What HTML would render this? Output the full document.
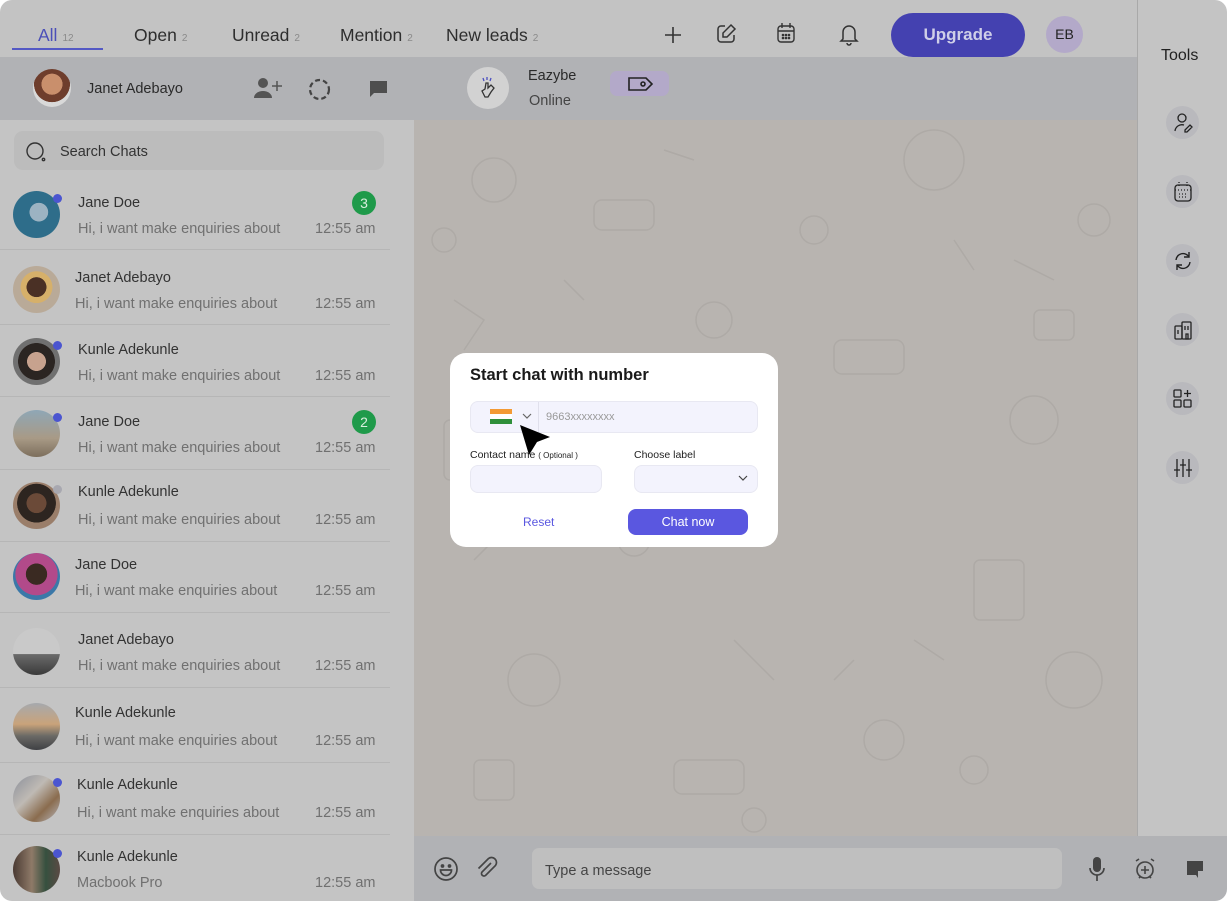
<!DOCTYPE html>
<html><head><meta charset="utf-8"><style>
*{margin:0;padding:0;box-sizing:border-box}
body{width:1227px;height:901px;overflow:hidden;background:#fff;font-family:"Liberation Sans",sans-serif;position:relative}
.a{position:absolute}
.t{position:absolute;white-space:nowrap;line-height:18px}
.name{font-size:14.5px;color:#333}
.msg{font-size:14.5px;color:#707070}
.time{font-size:14.5px;color:#707070;left:315px}
.av{position:absolute;left:13px;width:47px;height:47px;border-radius:50%}
.dot{position:absolute;left:53px;width:9px;height:9px;border-radius:50%;background:#4b55d0}
.sep{position:absolute;left:0;width:390px;height:1px;background:#b6b6b6}
.badge{position:absolute;left:352px;width:24px;height:24px;border-radius:50%;background:#1f9a4a;color:#d8eedd;font-size:14px;text-align:center;line-height:24px}
.ti{position:absolute;left:1166px;width:33px;height:33px;border-radius:50%;background:#b9b9bd}
.tab{position:absolute;top:25px;font-size:17.5px;color:#2e2e2e;line-height:20px}
.tab small{font-size:10px;color:#8a8a8a;margin-left:5px}
</style></head><body>
<div class="a" style="left:0;top:0;width:1137px;height:57px;background:#c3c3c3;border-top-left-radius:12px"></div>
<div class="tab" style="left:38px;color:#4b4fb8">All<small>12</small></div>
<div class="a" style="left:12px;top:48px;width:91px;height:2px;background:#5459c4"></div>
<div class="tab" style="left:134px">Open<small>2</small></div>
<div class="tab" style="left:232px">Unread<small>2</small></div>
<div class="tab" style="left:340px">Mention<small>2</small></div>
<div class="tab" style="left:446px">New leads<small>2</small></div>
<svg class="a" style="left:663px;top:25px" width="20" height="20" viewBox="0 0 20 20"><path d="M10 2v16M2 10h16" stroke="#333" stroke-width="1.6"/></svg>
<svg class="a" style="left:714px;top:22px" width="24" height="24" viewBox="0 0 24 24" fill="none" stroke="#333" stroke-width="1.5"><path d="M11 4H7a3 3 0 0 0-3 3v10a3 3 0 0 0 3 3h10a3 3 0 0 0 3-3v-4"/><path d="M17 3l4 4-8 8H9v-4z"/></svg>
<svg class="a" style="left:776px;top:22px" width="20" height="22" viewBox="0 0 20 22" fill="none" stroke="#333" stroke-width="1.4"><rect x="2" y="4" width="16" height="16" rx="3"/><path d="M2 9h16M6 1v5M14 1v5"/><circle cx="7" cy="13" r=".6" fill="#333"/><circle cx="10" cy="13" r=".6" fill="#333"/><circle cx="13" cy="13" r=".6" fill="#333"/><circle cx="7" cy="16" r=".6" fill="#333"/><circle cx="10" cy="16" r=".6" fill="#333"/><circle cx="13" cy="16" r=".6" fill="#333"/></svg>
<svg class="a" style="left:838px;top:22px" width="22" height="24" viewBox="0 0 22 24" fill="none" stroke="#333" stroke-width="1.5"><path d="M5 17V10a6 6 0 0 1 12 0v7l2 2H3z"/><path d="M9 21a2 2 0 0 0 4 0"/></svg>
<div class="a" style="left:891px;top:13px;width:134px;height:44px;border-radius:22px;background:#4441b0;color:#cfcfe8;font-size:17px;font-weight:bold;text-align:center;line-height:44px">Upgrade</div>
<div class="a" style="left:1046px;top:16px;width:37px;height:37px;border-radius:50%;background:#b3a9c9;color:#222;font-size:14px;text-align:center;line-height:37px">EB</div>
<div class="a" style="left:1137px;top:0;width:90px;height:836px;background:#c4c4c4;border-left:1px solid #a9a9a9;border-top-right-radius:12px"></div>
<div class="t" style="left:1161px;top:47px;font-size:16px;color:#222">Tools</div>
<div class="ti" style="top:106px"></div><div class="ti" style="top:175px"></div><div class="ti" style="top:244px"></div><div class="ti" style="top:313px"></div><div class="ti" style="top:382px"></div><div class="ti" style="top:451px"></div>
<svg class="a" style="left:1172px;top:112px" width="22" height="22" viewBox="0 0 22 22" fill="none" stroke="#222" stroke-width="1.3"><circle cx="10" cy="6" r="4"/><path d="M3 19a7 7 0 0 1 9-6"/><path d="M13 18l5-5 2 2-5 5h-2z"/></svg>
<svg class="a" style="left:1173px;top:181px" width="20" height="22" viewBox="0 0 20 22" fill="none" stroke="#222" stroke-width="1.3"><rect x="2" y="4" width="16" height="16" rx="3"/><path d="M2 9h16M6 1v5M14 1v5M6 13h8M6 16h8" stroke-dasharray="1 2"/></svg>
<svg class="a" style="left:1172px;top:250px" width="22" height="22" viewBox="0 0 22 22" fill="none" stroke="#222" stroke-width="1.4"><path d="M4 10a7 7 0 0 1 13-3M18 12a7 7 0 0 1-13 3"/><path d="M17 2v5h-5M5 20v-5h5"/></svg>
<svg class="a" style="left:1172px;top:319px" width="22" height="22" viewBox="0 0 22 22" fill="none" stroke="#222" stroke-width="1.3"><rect x="3" y="7" width="7" height="13" rx="1"/><rect x="10" y="3" width="9" height="17" rx="1"/><path d="M6 11v4M13 7v4M16 7v4M14 15h2v5h-2z"/></svg>
<svg class="a" style="left:1172px;top:388px" width="22" height="22" viewBox="0 0 22 22" fill="none" stroke="#222" stroke-width="1.3"><rect x="2" y="2" width="7" height="7" rx="1"/><rect x="2" y="12" width="7" height="7" rx="1"/><rect x="12" y="12" width="7" height="7" rx="1"/><path d="M15.5 2v7M12 5.5h7"/></svg>
<svg class="a" style="left:1172px;top:457px" width="22" height="22" viewBox="0 0 22 22" fill="none" stroke="#222" stroke-width="1.3"><path d="M5 2v18M11 2v18M17 2v18M2 13h6M8 8h6M14 13h6"/></svg>
<div class="a" style="left:0;top:57px;width:1137px;height:63px;background:#b1b2b5"></div>
<div class="a" style="left:33px;top:69px;width:38px;height:38px;border-radius:50%;background:radial-gradient(circle at 50% 40%,#c98f6c 0 35%,#6e3d2c 36% 60%,#d9d9d9 61%)"></div>
<div class="t" style="left:87px;top:80px;font-size:14.5px;color:#2a2a2a">Janet Adebayo</div>
<svg class="a" style="left:254px;top:76px" width="30" height="24" viewBox="0 0 30 24" fill="#545454"><circle cx="9" cy="7" r="5"/><path d="M0 22a9 7 0 0 1 18 0z"/><path d="M23 5v10M18 10h10" stroke="#545454" stroke-width="1.5"/></svg>
<svg class="a" style="left:307px;top:77px" width="25" height="25" viewBox="0 0 25 25" fill="none" stroke="#444" stroke-width="2.2"><circle cx="12.5" cy="12.5" r="9.5" stroke-dasharray="5 3"/></svg>
<svg class="a" style="left:369px;top:80px" width="19" height="18" viewBox="0 0 19 18" fill="#4e4e4e"><path d="M1 1h17v12H5l-4 4z"/></svg>
<div class="a" style="left:467px;top:67px;width:42px;height:42px;border-radius:50%;background:#d2d2d2"></div>
<svg class="a" style="left:477px;top:76px" width="22" height="24" viewBox="0 0 22 24" fill="none" stroke="#333" stroke-width="1.3"><path d="M8 21l-3-6 3-2 1-6 2 0 0 5 3-3 3 3-3 4-3 5z"/><path d="M6 2l1 3M10 1v3M14 2l-1 3" stroke="#4b4fc0"/></svg>
<div class="t" style="left:528px;top:67px;font-size:14.5px;color:#2a2a2a">Eazybe</div>
<div class="t" style="left:529px;top:92px;font-size:14.5px;color:#444">Online</div>
<div class="a" style="left:610px;top:71px;width:59px;height:25px;border-radius:7px;background:#b3a9c9"></div>
<svg class="a" style="left:627px;top:75px" width="28" height="18" viewBox="0 0 28 18" fill="none" stroke="#222" stroke-width="1.6"><path d="M2 3h17l6 6-6 6H2z"/><circle cx="16" cy="9" r="2"/></svg>
<div class="a" style="left:0;top:120px;width:414px;height:781px;background:#c4c4c4;border-bottom-left-radius:12px"></div>
<div class="a" style="left:14px;top:131px;width:370px;height:39px;border-radius:9px;background:#bcbcbc"></div>
<svg class="a" style="left:25px;top:141px" width="22" height="22" viewBox="0 0 22 22" fill="none" stroke="#333" stroke-width="1.4"><circle cx="10" cy="10" r="8"/><circle cx="18.5" cy="18.5" r="1.2"/></svg>
<div class="t" style="left:60px;top:143px;font-size:14.5px;color:#333">Search Chats</div>

<div class="sep" style="top:249px"></div><div class="sep" style="top:324px"></div><div class="sep" style="top:396px"></div><div class="sep" style="top:469px"></div><div class="sep" style="top:541px"></div><div class="sep" style="top:612px"></div><div class="sep" style="top:687px"></div><div class="sep" style="top:762px"></div><div class="sep" style="top:834px"></div>

<div class="av" style="top:191px;background:radial-gradient(circle at 55% 45%,#9cb3c2 0 25%,#2e6d8a 26%)"></div><div class="dot" style="top:194px"></div>
<div class="t name" style="left:78px;top:194px">Jane Doe</div><div class="t msg" style="left:78px;top:220px">Hi, i want make enquiries about</div><div class="t time" style="top:220px">12:55 am</div><div class="badge" style="top:191px">3</div>

<div class="av" style="top:266px;background:radial-gradient(circle at 50% 45%,#4a3025 0 28%,#d6b06a 29% 45%,#b9aa98 46%)"></div>
<div class="t name" style="left:75px;top:269px">Janet Adebayo</div><div class="t msg" style="left:75px;top:295px">Hi, i want make enquiries about</div><div class="t time" style="top:295px">12:55 am</div>

<div class="av" style="top:338px;background:radial-gradient(circle at 50% 50%,#c7a28e 0 28%,#2b2522 29% 55%,#707070 56%)"></div><div class="dot" style="top:341px"></div>
<div class="t name" style="left:78px;top:341px">Kunle Adekunle</div><div class="t msg" style="left:78px;top:367px">Hi, i want make enquiries about</div><div class="t time" style="top:367px">12:55 am</div>

<div class="av" style="top:410px;background:linear-gradient(#8fa7b6,#a89a86 60%,#7c6e5c)"></div><div class="dot" style="top:413px"></div>
<div class="t name" style="left:78px;top:413px">Jane Doe</div><div class="t msg" style="left:78px;top:439px">Hi, i want make enquiries about</div><div class="t time" style="top:439px">12:55 am</div><div class="badge" style="top:410px">2</div>

<div class="av" style="top:482px;background:radial-gradient(circle at 50% 45%,#6b4a38 0 28%,#2d2520 29% 55%,#9a7e6a 56%)"></div><div class="dot" style="top:485px;background:#a8a8b0"></div>
<div class="t name" style="left:78px;top:483px">Kunle Adekunle</div><div class="t msg" style="left:78px;top:511px">Hi, i want make enquiries about</div><div class="t time" style="top:511px">12:55 am</div>

<div class="av" style="top:553px;background:radial-gradient(circle at 50% 45%,#3a2a22 0 30%,#b24a8a 31% 60%,#3b78a8 61%)"></div>
<div class="t name" style="left:75px;top:556px">Jane Doe</div><div class="t msg" style="left:75px;top:582px">Hi, i want make enquiries about</div><div class="t time" style="top:582px">12:55 am</div>

<div class="av" style="top:628px;background:linear-gradient(#c9c9c9 55%,#6b6b6b 56%,#3a3a3a)"></div>
<div class="t name" style="left:78px;top:631px">Janet Adebayo</div><div class="t msg" style="left:78px;top:657px">Hi, i want make enquiries about</div><div class="t time" style="top:657px">12:55 am</div>

<div class="av" style="top:703px;background:linear-gradient(#a6a9ad,#c9a37a 45%,#6b6a66 70%,#3f4044)"></div>
<div class="t name" style="left:75px;top:704px">Kunle Adekunle</div><div class="t msg" style="left:75px;top:732px">Hi, i want make enquiries about</div><div class="t time" style="top:732px">12:55 am</div>

<div class="av" style="top:775px;background:linear-gradient(135deg,#8a8f9a,#bfbab4 40%,#8a6c4e 70%,#b8b8bf)"></div><div class="dot" style="top:778px"></div>
<div class="t name" style="left:77px;top:776px">Kunle Adekunle</div><div class="t msg" style="left:77px;top:804px">Hi, i want make enquiries about</div><div class="t time" style="top:804px">12:55 am</div>

<div class="av" style="top:846px;background:linear-gradient(90deg,#4a3a33,#8e7a68 40%,#36503f 70%,#5a4a44)"></div><div class="dot" style="top:849px"></div>
<div class="t name" style="left:77px;top:848px">Kunle Adekunle</div><div class="t msg" style="left:77px;top:874px">Macbook Pro</div><div class="t time" style="top:874px">12:55 am</div>

<div class="a" style="left:414px;top:120px;width:723px;height:716px;background:#b8b4b0"></div>
<svg class="a" style="left:414px;top:120px" width="723" height="716" fill="none" stroke="#aeaaa6" stroke-width="1.5">
<circle cx="80" cy="60" r="22"/><circle cx="520" cy="40" r="30"/><circle cx="300" cy="200" r="18"/><circle cx="620" cy="300" r="24"/><circle cx="120" cy="560" r="26"/><circle cx="470" cy="620" r="20"/><circle cx="660" cy="560" r="28"/><circle cx="220" cy="420" r="16"/><circle cx="400" cy="110" r="14"/><circle cx="30" cy="120" r="12"/><circle cx="680" cy="100" r="16"/><circle cx="260" cy="300" r="10"/><circle cx="560" cy="650" r="14"/><circle cx="340" cy="700" r="12"/>
<rect x="180" y="80" width="60" height="30" rx="8"/><rect x="420" y="220" width="70" height="34" rx="8"/><rect x="260" y="640" width="70" height="34" rx="8"/><rect x="30" y="300" width="50" height="60" rx="6"/><rect x="560" y="440" width="50" height="60" rx="6"/><rect x="620" y="190" width="40" height="30" rx="6"/><rect x="60" y="640" width="40" height="40" rx="6"/>
<path d="M40 180l30 20-20 30M600 140l40 20M320 520l40 40M60 440l30-30M500 520l30 20M200 300l30-20M150 160l20 20M420 560l20-20M540 120l20 30M250 30l30 10"/>
</svg>
<div class="a" style="left:414px;top:836px;width:813px;height:65px;background:#b1b2b5;border-bottom-right-radius:12px"></div>
<svg class="a" style="left:433px;top:856px" width="26" height="26" viewBox="0 0 26 26" fill="none" stroke="#444" stroke-width="1.7"><circle cx="13" cy="13" r="11"/><circle cx="9.5" cy="10" r="1" fill="#444"/><circle cx="16.5" cy="10" r="1" fill="#444"/><path d="M7.5 14h11a5.5 5.5 0 0 1-11 0z"/></svg>
<svg class="a" style="left:475px;top:856px" width="24" height="26" viewBox="0 0 24 26" fill="none" stroke="#444" stroke-width="1.7"><path d="M16 7l-9 9a2.5 2.5 0 0 0 3.5 3.5l10-10a5 5 0 0 0-7-7l-10 10"/></svg>
<div class="a" style="left:532px;top:848px;width:530px;height:41px;border-radius:7px;background:#bfbfbf"></div>
<div class="t" style="left:545px;top:862px;font-size:14.5px;color:#444">Type a message</div>
<svg class="a" style="left:1087px;top:856px" width="20" height="26" viewBox="0 0 20 26" fill="#444"><rect x="6" y="1" width="8" height="15" rx="4"/><path d="M3 12a7 7 0 0 0 14 0M10 19v6" stroke="#444" stroke-width="1.7" fill="none"/></svg>
<svg class="a" style="left:1133px;top:857px" width="24" height="24" viewBox="0 0 24 24" fill="none" stroke="#444" stroke-width="1.6"><circle cx="12" cy="13" r="8"/><path d="M12 9v8M8 13h8M3 4l3-2M21 4l-3-2M6 21l2-2M18 21l-2-2"/></svg>
<svg class="a" style="left:1186px;top:860px" width="19" height="19" viewBox="0 0 19 19" fill="#444"><path d="M1 1h16v10h-5v7l-2-3H1z"/></svg>
<div class="a" style="left:450px;top:353px;width:328px;height:194px;border-radius:16px;background:#fff"></div>
<div class="t" style="left:470px;top:366px;font-size:16.5px;font-weight:bold;color:#1a1a1a">Start chat with number</div>
<div class="a" style="left:470px;top:401px;width:288px;height:32px;border-radius:8px;background:#f3f3fd;border:1px solid #e8e8f2"></div>
<div class="a" style="left:538px;top:402px;width:1px;height:30px;background:#e0e0ec"></div>
<div class="a" style="left:490px;top:409px;width:22px;height:15px;background:linear-gradient(#f39a34 33%,#fff 33% 66%,#2f8f3a 66%)"></div>
<svg class="a" style="left:521px;top:412px" width="12" height="8" viewBox="0 0 12 8" fill="none" stroke="#666" stroke-width="1.2"><path d="M2 2l4 4 4-4"/></svg>
<div class="t" style="left:546px;top:408px;font-size:11px;color:#999">9663xxxxxxxx</div>
<div class="t" style="left:470px;top:446px;font-size:10.5px;color:#222">Contact name <span style="font-size:8px">( Optional )</span></div>
<div class="t" style="left:634px;top:446px;font-size:10.5px;color:#222">Choose label</div>
<div class="a" style="left:470px;top:465px;width:132px;height:28px;border-radius:8px;background:#f3f3fd;border:1px solid #e8e8f2"></div>
<div class="a" style="left:634px;top:465px;width:124px;height:28px;border-radius:8px;background:#f3f3fd;border:1px solid #e8e8f2"></div>
<svg class="a" style="left:737px;top:474px" width="12" height="8" viewBox="0 0 12 8" fill="none" stroke="#444" stroke-width="1.2"><path d="M2 2l4 4 4-4"/></svg>
<div class="t" style="left:523px;top:513px;font-size:12px;color:#5a57e0">Reset</div>
<div class="a" style="left:628px;top:509px;width:120px;height:26px;border-radius:8px;background:#5a57e0;color:#fff;font-size:12.5px;text-align:center;line-height:26px">Chat now</div>
<svg class="a" style="left:517px;top:423px" width="34" height="34" viewBox="0 0 34 34"><path d="M3 2l30 12-13 5-8 13z" fill="#000"/></svg>
</body></html>
